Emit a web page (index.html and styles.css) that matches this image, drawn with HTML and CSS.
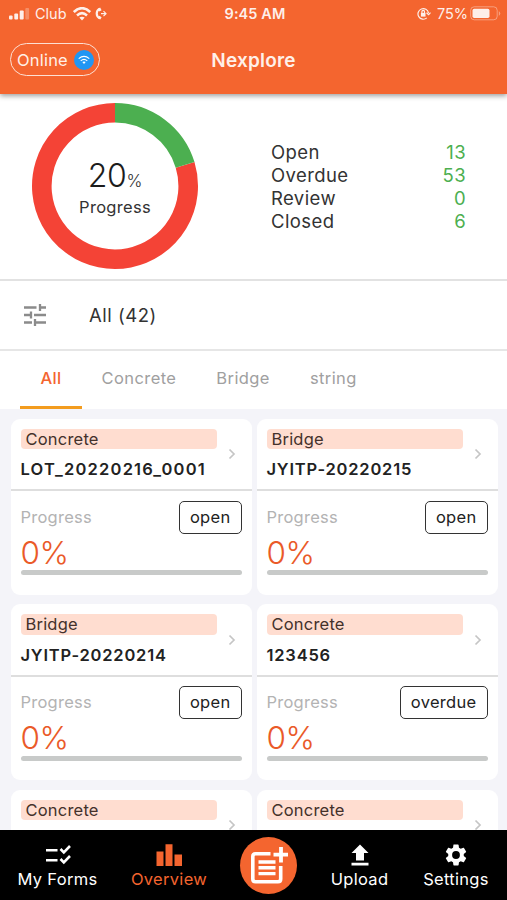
FILE: index.html
```html
<!DOCTYPE html>
<html lang="en">
<head>
<meta charset="utf-8">
<title>Nexplore</title>
<link rel="stylesheet" href="styles.css">
</head>
<body>
<div class="app">
  <header class="header">
    <div class="status">
      <div class="status-left">
        <svg class="signal" width="21" height="12" viewBox="0 0 21 12" fill="#fff"><rect y="7.5" width="3.6" height="4" rx="1"/><rect x="5.3" y="5.5" width="3.8" height="6" rx="1"/><rect x="10.7" y="2.5" width="4" height="9" rx="1"/><rect x="16.3" width="3.8" height="11.5" rx="1" opacity=".3"/></svg>
        <span class="carrier">Club</span>
        <svg class="wifi" width="18" height="14" viewBox="0 0 18 14" fill="none" stroke="#fff" stroke-width="2.6"><path d="M.8 5Q9-2.6 17.200 5M4 8.400Q9 4 14 8.400"/><path d="M9 13.500l-2.700-2.900Q9 8.800 11.700 10.600z" fill="#fff" stroke="none"/></svg>
        <svg class="call" width="12" height="13" viewBox="0 0 12 13" fill="none" stroke="#fff"><path d="M4.800 2C.6 3.500.8 9.500 4.800 11.300" stroke-width="2.200"/><path d="M4 1.200l1.500 2.600M4.200 11.800l1.300-2.300" stroke-width="2.600"/><path d="M6 6.700h4.700M8.500 4.200L11 6.700 8.500 9.200" stroke-width="1.200"/></svg>
      </div>
      <div class="clock">9:45 AM</div>
      <div class="status-right">
        <svg width="14" height="13" viewBox="0 0 14 13" fill="none" stroke="#fff" stroke-width="1.200"><path d="M9.800 10.900A5.300 5.300 0 1 1 11.500 6M9.500 5.700l2.100 1.900 1.900-2"/><rect x="3.900" y="5.900" width="4.600" height="3.700" fill="#fff" stroke="none"/><path d="M4.900 6V4.700a1.300 1.300 0 0 1 2.600 0V6"/></svg>
        <span class="battery-text">75%</span>
        <svg class="battery" width="31" height="15" viewBox="0 0 31 15"><rect x=".7" y=".8" width="26.500" height="13" rx="3.500" fill="none" stroke="#fff" stroke-opacity=".42"/><rect x="2.500" y="2.700" width="17" height="9.300" rx="1.700" fill="#fff"/><path d="M28.800 5v5q3-2.500 0-5" fill="#fff" opacity=".42"/></svg>
      </div>
    </div>
    <div class="titlebar">
      <div class="online"><span>Online</span>
        <svg width="20" height="20" viewBox="0 0 20 20"><circle cx="10" cy="10" r="10" fill="#2196f3"/><g fill="none" stroke="#fff" stroke-width="1.100"><path d="M4.700 8.600Q10 4.200 15.300 8.600M6.700 10.800Q10 8 13.300 10.800"/></g><path d="M10 14l-1.700-1.900q1.700-1 3.400 0z" fill="#fff"/></svg>
      </div>
      <h1 class="title">Nexplore</h1>
      <span></span>
    </div>
  </header>

  <section class="summary">
    <div class="donut">
      <svg class="ring" width="168" height="168" viewBox="0 0 168 168" fill="none" stroke-width="19.600"><path d="M154.100 62.900A73.200 73.200 0 1 1 84 10.800" stroke="#f44336"/><path d="M84 10.800A73.200 73.200 0 0 1 154.100 62.900" stroke="#4caf50"/></svg>
      <div class="donut-text">
        <div class="donut-value">20<span class="pct">%</span></div>
        <div class="donut-label">Progress</div>
      </div>
    </div>
    <dl class="stats">
      <dt>Open</dt><dd>13</dd>
      <dt>Overdue</dt><dd>53</dd>
      <dt>Review</dt><dd>0</dd>
      <dt>Closed</dt><dd>6</dd>
    </dl>
  </section>

  <section class="filter">
    <svg width="24" height="24" viewBox="0 0 24 24" fill="none" stroke="#8b8b8b" stroke-width="2.300"><path d="M1 4.500h12.500M16 4.500h7M17 1v7M1 12h7M11 12h12M8 8.500v7M1 19.500h8M12 19.500h11M12 16v7"/></svg>
    <span class="filter-text">All (42)</span>
  </section>

  <nav class="tabs">
    <span class="tab active">All</span><span class="tab">Concrete</span><span class="tab">Bridge</span><span class="tab">string</span>
  </nav>

  <main class="grid">
    <article class="card">
      <div class="card-head"><div class="names"><div class="tag">Concrete</div><div class="lot lot-long">LOT_20220216_0001</div></div><svg class="chev" width="8" height="12" viewBox="0 0 8 12"><path d="M1.500 1.500L6 6l-4.500 4.500"/></svg></div>
      <div class="card-body"><div class="row"><span class="label">Progress</span><span class="badge">open</span></div><div class="percent">0%</div><div class="bar"></div></div>
    </article>
    <article class="card">
      <div class="card-head"><div class="names"><div class="tag">Bridge</div><div class="lot">JYITP-20220215</div></div><svg class="chev" width="8" height="12" viewBox="0 0 8 12"><path d="M1.500 1.500L6 6l-4.500 4.500"/></svg></div>
      <div class="card-body"><div class="row"><span class="label">Progress</span><span class="badge">open</span></div><div class="percent">0%</div><div class="bar"></div></div>
    </article>
    <article class="card">
      <div class="card-head"><div class="names"><div class="tag">Bridge</div><div class="lot">JYITP-20220214</div></div><svg class="chev" width="8" height="12" viewBox="0 0 8 12"><path d="M1.500 1.500L6 6l-4.500 4.500"/></svg></div>
      <div class="card-body"><div class="row"><span class="label">Progress</span><span class="badge">open</span></div><div class="percent">0%</div><div class="bar"></div></div>
    </article>
    <article class="card">
      <div class="card-head"><div class="names"><div class="tag">Concrete</div><div class="lot">123456</div></div><svg class="chev" width="8" height="12" viewBox="0 0 8 12"><path d="M1.500 1.500L6 6l-4.500 4.500"/></svg></div>
      <div class="card-body"><div class="row"><span class="label">Progress</span><span class="badge">overdue</span></div><div class="percent">0%</div><div class="bar"></div></div>
    </article>
    <article class="card">
      <div class="card-head"><div class="names"><div class="tag">Concrete</div></div><svg class="chev" width="8" height="12" viewBox="0 0 8 12"><path d="M1.500 1.500L6 6l-4.500 4.500"/></svg></div>
    </article>
    <article class="card">
      <div class="card-head"><div class="names"><div class="tag">Concrete</div></div><svg class="chev" width="8" height="12" viewBox="0 0 8 12"><path d="M1.500 1.500L6 6l-4.500 4.500"/></svg></div>
    </article>
  </main>

  <footer class="nav">
    <div class="nav-item">
      <svg width="26" height="24" viewBox="0 0 26 24" fill="none" stroke="#fff" stroke-width="2.600"><path d="M1 7.300h11.500M1 17.200h11.500"/><path d="M15.500 6l3.300 3.300L25 3M15.500 16l3.300 3.300L25 13"/></svg>
      <span>My Forms</span>
    </div>
    <div class="nav-item current">
      <svg width="26" height="24" viewBox="0 0 26 24" fill="#f4652f"><path d="M.5 8.500h7V23h-7zM9.500 1.300h7V23h-7zM18.500 11.500H26V23h-7.500z"/></svg>
      <span>Overview</span>
    </div>
    <div class="add">
      <svg width="38" height="38" viewBox="0 0 38 38" fill="none" stroke="#fff"><path d="M20.500 6.800H5.500Q2.800 6.800 2.800 9.500V32Q2.800 34.700 5.500 34.700H28Q30.700 34.700 30.700 32V19" stroke-width="3.600"/><path d="M8.500 15H25.500M8.500 20.800H25.500M8.500 26.600H25.500" stroke-width="3.400"/><path d="M31 0V15.500M23.500 7.700H38" stroke-width="3.800"/></svg>
    </div>
    <div class="nav-item">
      <svg width="26" height="24" viewBox="0 0 26 24" fill="#fff"><path d="M13 1.500l8.500 8.500H17v7.500H9V10H4.500zM4.500 19.800h17v2.800h-17z"/></svg>
      <span>Upload</span>
    </div>
    <div class="nav-item">
      <svg width="28" height="28" viewBox="0 0 24 24" fill="#fff"><path d="M19.140 12.940c.04-.3.060-.61.060-.94s-.02-.64-.07-.94l2.030-1.580a.49.490 0 0 0 .12-.61l-1.920-3.320a.488.488 0 0 0-.59-.22l-2.390.96c-.5-.38-1.030-.7-1.620-.94l-.36-2.540a.484.484 0 0 0-.48-.41h-3.840c-.24 0-.43.170-.47.410l-.36 2.540c-.59.240-1.130.570-1.620.940l-2.390-.96c-.22-.08-.47 0-.59.220L2.740 8.870c-.12.210-.08.470.12.610l2.030 1.580c-.05.300-.09.630-.09.940s.02.640.070.940l-2.030 1.580a.49.490 0 0 0-.12.610l1.920 3.320c.12.220.37.290.59.220l2.390-.96c.5.380 1.030.7 1.620.940l.36 2.540c.05.240.24.410.48.410h3.840c.24 0 .44-.17.470-.41l.36-2.540c.59-.24 1.130-.56 1.620-.94l2.390.96c.22.080.47 0 .59-.22l1.920-3.320c.12-.22.070-.47-.12-.61zM12 15.600A3.600 3.600 0 1 1 12 8.400a3.600 3.600 0 0 1 0 7.200z"/></svg>
      <span>Settings</span>
    </div>
  </footer>
</div>
</body>
</html>
```
FILE: styles.css
```css
* { box-sizing: border-box; }
body { margin: 0; font-family: Inter, "Liberation Sans", sans-serif; background: #fff; }
svg { display: block; flex: none; }
.app { height: 900px; display: flex; flex-direction: column; overflow: hidden; }

.header { position: relative; z-index: 1; flex: none; height: 94px; background: #f4652f; color: #fff; box-shadow: 0 2px 5px rgba(0,0,0,.38); }
.status { height: 27px; display: grid; grid-template-columns: 1fr auto 1fr; align-items: center; padding: 0 6px 0 9px; font-size: 14.500px; opacity: .9; }
.status-left, .status-right { display: flex; align-items: center; }
.status-right { justify-content: flex-end; }
.carrier { margin-left: 5px; }
.wifi { margin-left: 6px; }
.call { margin-left: 4px; }
.clock { font-weight: 600; letter-spacing: .1px; }
.battery-text { margin: 0 2px 0 6px; letter-spacing: 0; }
.titlebar { height: 65px; display: grid; grid-template-columns: 1fr auto 1fr; align-items: center; padding: 0 10px; }
.online { width: 90px; height: 33px; border: 1.500px solid #fde0d4; border-radius: 17px; display: flex; align-items: center; justify-content: space-between; padding: 0 5px 0 6px; font-size: 16.500px; letter-spacing: .2px; color: #fff0e9; }
.title { margin: 0; padding-top: 1px; font-size: 19px; font-weight: 600; letter-spacing: .2px; color: #fff0e9; }

.summary { flex: none; height: 187px; border-bottom: 2px solid #e2e2e2; display: flex; color: #333; }
.donut { display: grid; margin: 8px 0 0 31px; width: 168px; height: 168px; place-items: center; }
.ring, .donut-text { grid-area: 1 / 1; }
.donut-text { text-align: center; padding-top: 3px; }
.donut-value { font-size: 32px; line-height: 38px; font-weight: 300; color: #1c1c1c; letter-spacing: -.3px; }
.pct { font-size: 17px; color: #333; }
.donut-label { font-size: 16.500px; line-height: 22px; letter-spacing: .3px; margin-top: -4px; }
.stats { margin: 46.500px 0 0 72px; width: 195px; display: grid; grid-template-columns: 1fr auto; grid-auto-rows: 23.300px; align-content: start; font-size: 18.500px; line-height: 23.300px; letter-spacing: .4px; }
.stats dd { margin: 0; text-align: right; color: #4caf50; }

.filter { flex: none; height: 70px; border-bottom: 2px solid #e6e6e6; display: flex; align-items: center; padding-left: 23px; color: #333; }
.filter-text { margin-left: 42px; font-size: 18.500px; letter-spacing: .5px; }

.tabs { flex: none; height: 58px; display: flex; padding-left: 20.400px; color: #a0a0a0; font-size: 16.500px; letter-spacing: .4px; }
.tab { padding: 0 20px; line-height: 55px; height: 58px; }
.tab.active { color: #f4652f; font-weight: 500; border-bottom: 3px solid #f39c1f; }

.grid { flex: 1; min-height: 0; overflow: hidden; background: #f4f4f9; padding: 9.500px 9.500px 0 10.500px; display: grid; grid-template-columns: 1fr 1fr; grid-auto-rows: 176px; gap: 9.700px 5px; align-content: start; }
.card { background: #fff; border-radius: 9px; }
.card-head { height: 72.500px; border-bottom: 2px solid #dedede; padding: 10px 15.500px 0 10px; display: flex; justify-content: space-between; }
.names { width: 196px; }
.tag { height: 20.500px; border-radius: 4px; background: #ffddd0; padding-left: 5px; font-size: 16.500px; line-height: 20px; letter-spacing: .2px; color: #44312b; }
.lot { margin-top: 9px; font-size: 16.500px; line-height: 22px; font-weight: 600; letter-spacing: .8px; color: #222; white-space: nowrap; }
.lot-long { letter-spacing: 1.200px; }
.chev { margin-top: 19.500px; fill: none; stroke: #c5c5c5; stroke-width: 1.700; }
.card-body { padding: 9.500px 10px 0; }
.row { display: flex; justify-content: space-between; height: 33px; }
.label { font-size: 16.500px; line-height: 32px; letter-spacing: .25px; color: #b3b3b3; }
.badge { height: 33px; border: 1.800px solid #333; border-radius: 5px; padding: 0 10px; font-size: 16.500px; line-height: 30px; letter-spacing: .3px; color: #222; }
.percent { margin-top: 1px; font-size: 31.500px; line-height: 36px; font-weight: 300; letter-spacing: -.5px; color: #ea5a28; }
.bar { height: 5px; margin-top: -.5px; border-radius: 3px; background: #c8cac9; }

.nav { flex: none; height: 70px; background: #000; color: #fff; display: grid; grid-template-columns: 115px 108px 91px 91px 102px; font-size: 16.500px; letter-spacing: .3px; }
.nav-item { display: flex; flex-direction: column; align-items: center; justify-content: space-between; padding: 12px 0 10px; line-height: 21px; }
.nav-item svg { height: 26px; }
.current { color: #f4652f; }
.add { width: 57px; height: 57px; border-radius: 50%; background: #f4652f; margin: 7px 0 0 17px; display: flex; align-items: center; justify-content: center; }
```
